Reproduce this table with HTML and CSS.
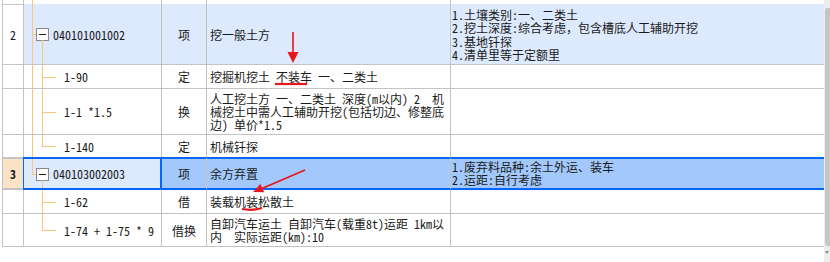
FILE: index.html
```html
<!DOCTYPE html>
<html lang="zh">
<head>
<meta charset="utf-8">
<link rel="stylesheet" href="styles.css">
</head>
<body>
<div class="page">
  <div class="grid">
    <div class="row r-strip">
      <div class="c num"></div>
      <div class="c code"><span class="t outer full"></span></div>
      <div class="c unit"></div>
      <div class="c name"></div>
      <div class="c desc"></div>
    </div>

    <div class="row r-parent hl" style="height:61px">
      <div class="c num">2</div>
      <div class="c code parent"><span class="t outer full"></span><span class="t hbar-o"></span><span class="box"></span><span class="t inner from-box"></span>040101001002</div>
      <div class="c unit">项</div>
      <div class="c name">挖一般土方</div>
      <div class="c desc">1.土壤类别:一、二类土<br>2.挖土深度:综合考虑，包含槽底人工辅助开挖<br>3.基地钎探<br>4.清单里等于定额里</div>
    </div>

    <div class="row" style="height:24px">
      <div class="c num"></div>
      <div class="c code child"><span class="t outer full"></span><span class="t inner full"></span><span class="t hbar-i"></span>1-90</div>
      <div class="c unit">定</div>
      <div class="c name">挖掘机挖土 不装车 一、二类土</div>
      <div class="c desc"></div>
    </div>

    <div class="row" style="height:46px">
      <div class="c num"></div>
      <div class="c code child"><span class="t outer full"></span><span class="t inner full"></span><span class="t hbar-i"></span>1-1 *1.5</div>
      <div class="c unit">换</div>
      <div class="c name">人工挖土方 一、二类土 深度(m以内) 2&nbsp; 机械挖土中需人工辅助开挖(包括切边、修整底边) 单价*1.5</div>
      <div class="c desc"></div>
    </div>

    <div class="row nobottom" style="height:22px">
      <div class="c num"></div>
      <div class="c code child"><span class="t outer full"></span><span class="t inner half"></span><span class="t hbar-i"></span>1-140</div>
      <div class="c unit">定</div>
      <div class="c name">机械钎探</div>
      <div class="c desc"></div>
    </div>

    <div class="row r-sel" style="height:33px">
      <div class="c num sel-num">3</div>
      <div class="c code parent focus"><span class="t outer half"></span><span class="t hbar-o"></span><span class="box"></span><span class="t inner from-box"></span>040103002003</div>
      <div class="c unit dark">项</div>
      <div class="c name dark">余方弃置</div>
      <div class="c desc dark">1.废弃料品种:余土外运、装车<br>2.运距:自行考虑</div>
    </div>

    <div class="row" style="height:24px">
      <div class="c num"></div>
      <div class="c code child"><span class="t inner full"></span><span class="t hbar-i"></span>1-62</div>
      <div class="c unit">借</div>
      <div class="c name">装载机装松散土</div>
      <div class="c desc"></div>
    </div>

    <div class="row" style="height:33px">
      <div class="c num"></div>
      <div class="c code child"><span class="t inner half"></span><span class="t hbar-i"></span>1-74 + 1-75 * 9</div>
      <div class="c unit">借换</div>
      <div class="c name">自卸汽车运土 自卸汽车(载重8t)运距 1km以内&nbsp; 实际运距(km):10</div>
      <div class="c desc"></div>
    </div>
  </div>

  <div class="scrollbar">
    <div class="thumb"></div>
    <div class="arrow"></div>
  </div>

  <svg class="marks" width="830" height="262" viewBox="0 0 830 262">
    <line x1="293" y1="32" x2="293" y2="54" stroke="#e8161c" stroke-width="1.6"/>
    <polygon points="287.5,52 298.5,52 293,63" fill="#e8161c"/>
    <line x1="275" y1="84" x2="307" y2="84" stroke="#e8161c" stroke-width="2.2"/>
    <path d="M305,170 L262,188.5" stroke="#e8161c" stroke-width="1.8" fill="none"/>
    <polygon points="253,192 260.4,184 264.2,192.2" fill="#e8161c"/>
    <path d="M242,209 Q252,211 262,208" stroke="#e8161c" stroke-width="2.2" fill="none"/>
  </svg>
</div>
</body>
</html>
```

FILE: styles.css
```css
html, body {
  margin: 0;
  padding: 0;
  background: #ffffff;
}

.page {
  position: relative;
  width: 830px;
  height: 262px;
  display: flex;
  overflow: hidden;
  font-family: "Noto Sans Mono CJK SC", "Noto Sans CJK SC", "Liberation Mono", monospace;
  font-size: 12px;
  color: #1a1a1a;
}

.grid {
  margin-left: 2px;
  width: 822px;
  align-self: flex-start;
  border-left: 1px solid #c3c3c3;
  box-sizing: content-box;
}

.row {
  display: grid;
  grid-template-columns: 21px 138px 45px 244px 373px;
  box-sizing: border-box;
}

.r-strip {
  height: 4px;
}

.c {
  box-sizing: border-box;
  border-right: 1px solid #c3c3c3;
  border-bottom: 1px solid #c3c3c3;
  display: flex;
  align-items: center;
  line-height: 13px;
  overflow: hidden;
  position: relative;
}

.c.desc {
  border-right: none;
}

.nobottom .c {
  border-bottom: none;
}

.num {
  justify-content: center;
}

.code {
  white-space: pre;
}

.code.parent {
  padding-left: 29px;
}

.code.child {
  padding-left: 40px;
}

.unit {
  justify-content: center;
}

.name {
  padding-left: 3px;
  padding-right: 2px;
}

.desc {
  padding-left: 1px;
  align-items: flex-start;
  padding-top: 4px;
  line-height: 13.4px;
}

.hl .code,
.hl .unit,
.hl .name,
.hl .desc {
  background: #dde9fc;
}

/* selected row */
.r-sel .c {
  border-top: 2px solid #0566f5;
  border-bottom: 2px solid #0566f5;
}

.r-sel .desc {
  padding-top: 1px;
}

.r-sel .sel-num {
  border-top: 2px solid #c3c3c3;
  border-bottom: 2px solid #c3c3c3;
  background: #fde3c6;
  font-weight: bold;
}

.r-sel .focus {
  background: #dde9fc;
  border-right: 2px solid #0566f5;
  box-shadow: -1px 0 0 #0566f5;
}

.dark {
  background: #a3c9fc;
}

/* tree lines */
.t {
  position: absolute;
  background: #fcc67a;
}

.outer {
  left: 8px;
  width: 1px;
  top: 0;
}

.outer.full {
  bottom: 0;
}

.outer.half {
  height: 50%;
}

.inner {
  left: 18px;
  width: 1px;
  top: 0;
}

.inner.full {
  bottom: -1px;
}

.inner.half {
  height: 50%;
}

.inner.from-box {
  top: calc(50% + 6px);
  bottom: -1px;
}

.hbar-o {
  left: 8px;
  width: 5px;
  height: 1px;
  top: 50%;
}

.hbar-i {
  left: 18px;
  width: 14px;
  height: 1px;
  top: 50%;
}

.box {
  position: absolute;
  left: 12px;
  top: calc(50% - 6px);
  width: 11px;
  height: 11px;
  border: 1px solid #8a8a8a;
  background: #ffffff;
}

.box::after {
  content: "";
  position: absolute;
  left: 2px;
  right: 2px;
  top: 5px;
  height: 1px;
  background: #222;
}

/* scrollbar */
.scrollbar {
  width: 6px;
  height: 262px;
  background: #ededed;
  display: flex;
  flex-direction: column;
  align-items: flex-end;
}

.thumb {
  margin-top: 8px;
  width: 5px;
  height: 238px;
  background: #c6c6c6;
  border-radius: 2px 0 0 2px;
}

.arrow {
  margin-top: 5px;
  margin-right: 1px;
  width: 0;
  height: 0;
  border-left: 2px solid transparent;
  border-right: 2px solid transparent;
  border-top: 3px solid #8a8a8a;
}

.marks {
  position: absolute;
  left: 0;
  top: 0;
  pointer-events: none;
}
```
